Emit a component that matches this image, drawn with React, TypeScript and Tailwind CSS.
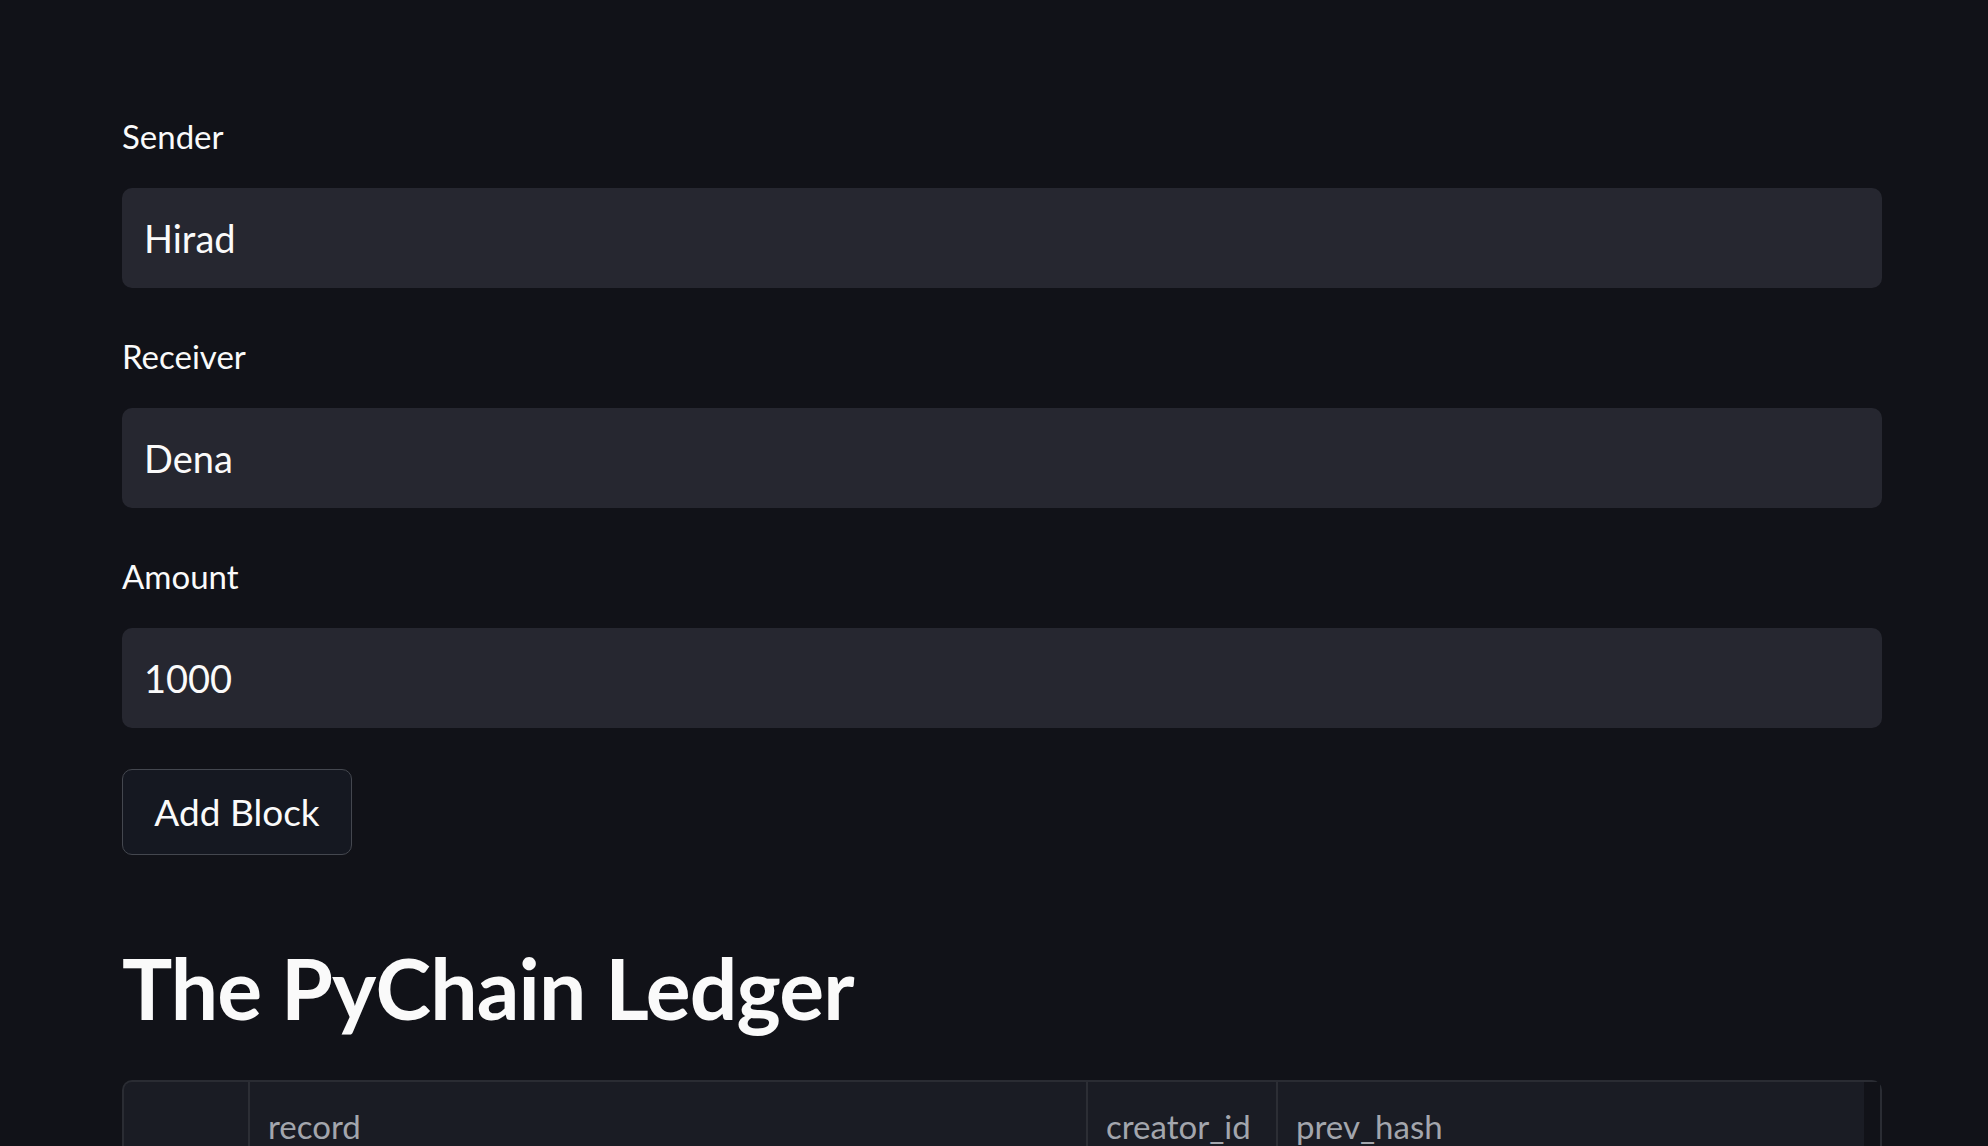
import React from "react";

const font = { fontFamily: '"Lato", "Noto Sans", sans-serif' };

function Field({ label, value }: { label: string; value: string }) {
  return (
    <div className="flex flex-col">
      <div className="h-[60px] flex items-center text-[33px] text-[#fafafa] pb-[5px]">{label}</div>
      <div className="mt-[19px] h-[100px] rounded-[10px] bg-[#262730] flex items-center pl-[22px] text-[38px] text-[#fafafa]">
        {value}
      </div>
    </div>
  );
}

export default function App() {
  return (
    <div className="min-h-[1146px] w-full bg-[#111218] overflow-hidden" style={font}>
      <div className="ml-[122px] w-[1760px] pt-[109px] flex flex-col">
        <Field label="Sender" value="Hirad" />
        <div className="h-[41px]" />
        <Field label="Receiver" value="Dena" />
        <div className="h-[41px]" />
        <Field label="Amount" value="1000" />
        <div className="h-[41px]" />
        <button className="w-[230px] h-[86px] rounded-[10px] border border-[#44474f] bg-[#151821] text-[37px] text-[#fafafa] flex items-center justify-center">
          Add Block
        </button>
        <h2 className="mt-[93px] h-[80px] flex items-center text-[84px] font-bold text-[#fafafa] tracking-[-0.01em]">
          The PyChain Ledger
        </h2>
        <div className="mt-[52px] h-[120px] rounded-t-[10px] border-2 border-b-0 border-[#2a2c33] bg-[#1a1c24] flex text-[33px] leading-[48px] text-[#a3a6ad]">
          <div className="w-[126px] border-r-2 border-[#2c2e35]" />
          <div className="w-[838px] border-r-2 border-[#2c2e35] pl-[18px] pt-[20px]">record</div>
          <div className="w-[190px] border-r-2 border-[#2c2e35] pl-[18px] pt-[20px]">creator_id</div>
          <div className="flex-1 pl-[18px] pt-[20px]">prev_hash</div>
          <div className="w-[16px] bg-[#111218]" />
        </div>
      </div>
    </div>
  );
}
